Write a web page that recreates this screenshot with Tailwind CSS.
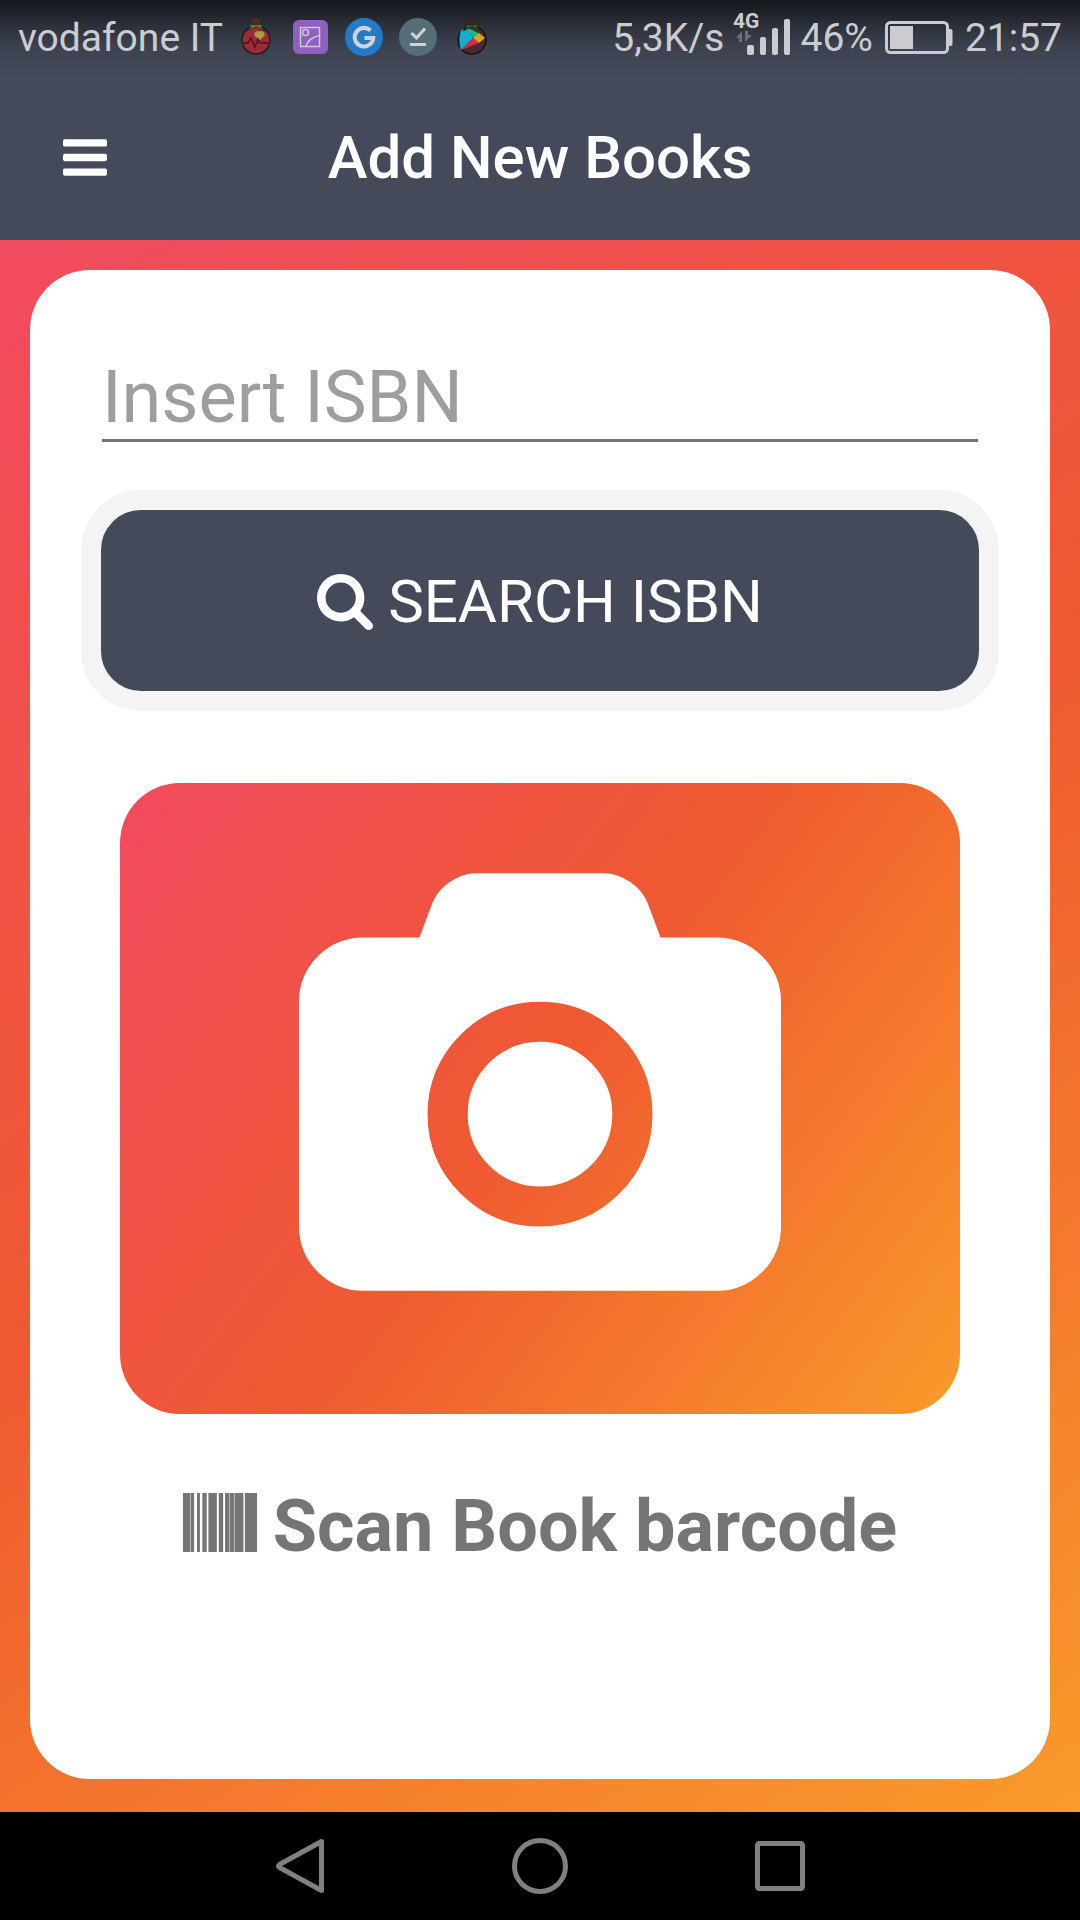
<!DOCTYPE html>
<html lang="en">
<head>
<meta charset="utf-8">
<meta name="viewport" content="width=device-width, initial-scale=1">
<title>Add New Books</title>
<script src="https://cdn.jsdelivr.net/npm/@tailwindcss/browser@4"></script>
</head>
<body class="flex min-h-screen flex-col bg-black font-[Roboto,sans-serif]">
<header class="bg-[#444a59] text-white">
  <!-- System status bar -->
  <div class="flex h-[76px] items-center justify-between bg-[linear-gradient(180deg,#181a1e_0%,#1c1f24_12%,#2d313a_35%,#3c4250_62%,#444a59_100%)] px-[18px] text-[39px] leading-[72px] text-[#cbccd0]">
    <div class="flex items-center gap-[14px]">
      <span class="whitespace-nowrap">vodafone IT</span>
      <div class="flex items-center gap-4 pb-[2px]">
      <svg class="h-[38px] w-[38px] shrink-0" viewBox="0 0 38 38" aria-hidden="true">
        <circle cx="19" cy="22" r="14" fill="#9b2b35" stroke="#1d1f25" stroke-width="1.5"/>
        <circle cx="19" cy="4" r="2.5" fill="none" stroke="#6e2530" stroke-width="2"/>
        <path d="M19 7l-7-1 2 3-4 4 6-3 3-1 3 1 6 3-4-4 2-3z" fill="#6e7a35" stroke="#2f351d"/>
        <path d="M22.500 22l-4.500-4.500a3 3 0 0 1 4.500-3.500a3 3 0 0 1 4.500 3.500z" fill="#b39a3f" stroke="#b39a3f"/>
        <path d="M5 25h6l3-5 4 9 3-8 2 4h10" fill="none" stroke="#4b161d" stroke-width="1.500"/>
      </svg>
      <svg class="h-[38px] w-[38px] shrink-0" viewBox="0 0 38 38" aria-hidden="true">
        <rect x="2" y="2" width="35" height="34" rx="6" fill="#9060bf"/>
        <g fill="none" stroke="#cfc6dc" stroke-width="1.500"><rect x="9.500" y="9.500" width="19" height="19"/><circle cx="14.500" cy="14.500" r="3"/><path d="M15 28.500c1-4 4-9 13.500-11"/></g>
      </svg>
      <svg class="h-[38px] w-[38px] shrink-0" viewBox="0 0 38 38" aria-hidden="true">
        <circle cx="19" cy="19" r="19" fill="#237bc8"/>
        <path d="M25.500 12.500A9.300 9.300 0 1 0 28.300 20H19.500" fill="none" stroke="#d0d3d8" stroke-width="4"/>
      </svg>
      <svg class="h-[38px] w-[38px] shrink-0" viewBox="0 0 38 38" aria-hidden="true">
        <circle cx="19" cy="19" r="19" fill="#546e7a"/>
        <path d="M12.500 15l5 5L26 10.500M11 26.500h16" fill="none" stroke="#d0d3d6" stroke-width="3"/>
      </svg>
      <svg class="h-[38px] w-[38px] shrink-0" viewBox="0 0 38 38" aria-hidden="true">
        <circle cx="19" cy="22" r="14" fill="#4b2a2e" stroke="#17181b" stroke-width="1.500"/>
        <circle cx="19" cy="4" r="2.500" fill="none" stroke="#3a2023" stroke-width="2"/>
        <path d="M8 12l8-2 4 10-12 12c-2-6-2-14 0-20z" fill="#14acd0"/>
        <path d="M15 10l12 6-6 5z" fill="#1cc06f"/>
        <path d="M26 15l6 5-6 5-6-5z" fill="#d9a81a"/>
        <path d="M8 32l12-12 6 5z" fill="#cf3048"/>
        <path d="M19 7l-7-1 2 3-4 4 6-3 3-1 3 1 6 3-4-4 2-3z" fill="#35652c" stroke="#1c2a18"/>
      </svg>
      </div>
    </div>
    <div class="flex items-center">
      <span class="whitespace-nowrap">5,3K/s</span>
      <svg class="mb-2 ml-2 h-[46px] w-[60px] shrink-0 overflow-visible" viewBox="0 0 60 46" role="img" aria-label="4G signal">
        <text x="1" y="17" fill="#cbccd0" font-family="Roboto, sans-serif" font-size="21" font-weight="700">4G</text>
        <path d="M10 20v11H7v-4H4zM13 31V20h3v4h4z" fill="#6d7078"/>
        <g fill="#cbccd0"><rect x="15" y="34" width="7" height="10" rx="2"/><rect x="28" y="26" width="6" height="18" rx="2"/><rect x="40" y="17" width="6" height="27" rx="2"/><rect x="52" y="8" width="6" height="36" rx="2"/></g>
      </svg>
      <span class="ml-2">46%</span>
      <svg class="ml-3 h-[34px] w-[68px] shrink-0" viewBox="0 0 68 34" role="img" aria-label="Battery">
        <rect x="1.500" y="1.500" width="61" height="30" rx="4" fill="none" stroke="#cbccd0" stroke-width="3"/>
        <path d="M64 8h1.500a2 2 0 0 1 2 2v13a2 2 0 0 1-2 2H64z" fill="#cbccd0"/>
        <rect x="5" y="5" width="23" height="23" fill="#cbccd0"/>
      </svg>
      <time class="ml-3">21:57</time>
    </div>
  </div>
  <!-- App bar -->
  <div class="grid h-[164px] grid-cols-[1fr_auto_1fr] items-center px-[63px]">
    <button type="button" aria-label="Menu" class="mb-[2px] justify-self-start">
      <svg class="h-[37px] w-[44px]" viewBox="0 0 1536 1280" fill="currentColor" aria-hidden="true"><rect width="1536" height="256" rx="64"/><rect y="512" width="1536" height="256" rx="64"/><rect y="1024" width="1536" height="256" rx="64"/></svg>
    </button>
    <h1 class="text-[60px] leading-[72px] font-medium">Add New Books</h1>
  </div>
</header>

<main class="flex flex-1 flex-col bg-[linear-gradient(146deg,#f24a60_0%,#ef5a30_50%,#f99b2a_100%)] px-[30px] pt-[30px] pb-[33px]">
  <form class="flex flex-1 flex-col rounded-[60px] bg-white px-[51px] pt-[85px]">
    <input type="text" aria-label="Insert ISBN" placeholder="Insert ISBN" class="mx-[21px] h-[87px] border-b-[3px] border-[#757575] text-[72px] leading-[84px] text-[#757575] outline-none placeholder:text-[#9e9e9e]">
    <button type="button" class="mt-12 flex h-[221px] items-center justify-center gap-[15px] rounded-[60px] border-[20px] border-[#f4f4f4] bg-[#444a59] pt-[2px] text-[60px] leading-[72px] text-white">
      <svg class="h-14 w-14" viewBox="64 128 1664 1664" fill="currentColor" aria-hidden="true"><path d="M1216 832q0-185-131.500-316.500t-316.500-131.500-316.500 131.500-131.500 316.500 131.500 316.500 316.500 131.500 316.500-131.500 131.500-316.500zm512 832q0 52-38 90t-90 38q-54 0-90-38l-343-342q-179 124-399 124-143 0-273.500-55.500t-225-150-150-225-55.500-273.500 55.500-273.500 150-225 225-150 273.500-55.500 273.500 55.500 225 150 150 225 55.500 273.500q0 220-124 399l343 343q37 37 37 90z"/></svg>
      <span>SEARCH ISBN</span>
    </button>
    <button type="button" aria-label="Scan with camera" class="mx-[39px] mt-[72px] flex justify-center rounded-[60px] bg-[linear-gradient(127deg,#f24a60_0%,#ef5a30_50%,#f99b2a_100%)] pt-[90px] pb-[123px] text-white">
      <svg class="h-[418px] w-[482px]" viewBox="0 0 1920 1664" fill="currentColor" aria-hidden="true"><path d="M960 672q119 0 203.500 84.500t84.500 203.500-84.500 203.500-203.500 84.500-203.500-84.500-84.500-203.500 84.500-203.500 203.500-84.500zm704-416q106 0 181 75t75 181v896q0 106-75 181t-181 75h-1408q-106 0-181-75t-75-181v-896q0-106 75-181t181-75h224l51-136q19-49 69.500-84.500t103.500-35.500h512q53 0 103.500 35.500t69.500 84.500l51 136h224zm-704 1152q185 0 316.500-131.500t131.500-316.500-131.500-316.500-316.500-131.500-316.500 131.500-131.500 316.500 131.500 316.500 316.500 131.500z"/></svg>
    </button>
    <p class="mt-[71px] flex items-center justify-center gap-4 text-[72px] leading-[84px] font-bold text-[#757575]">
      <svg class="mb-[10px] h-[59px] w-[74px]" viewBox="0 0 153 120" preserveAspectRatio="none" fill="currentColor" aria-hidden="true"><path d="M0 0h15.500v120H0zM16.500 0h6.500v120h-6.500zM29 0h6v120h-6zM40 0h9v120h-9zM52.500 0h17.500v120H52.500zM74 0h9v120h-9zM87 0h8.500v120H87zM96.500 0h10v120h-10zM107.500 0h17.500v120h-17.500zM128 0h25v120h-25z"/></svg>
      <span>Scan Book barcode</span>
    </p>
  </form>
</main>

<!-- System navigation -->
<nav aria-label="System" class="flex h-[108px] items-center justify-center bg-black text-[#808080]">
  <button type="button" aria-label="Back" class="flex w-60 justify-center"><svg class="h-[58px] w-[58px]" viewBox="0 0 58 58" fill="none" stroke="currentColor" stroke-width="5" stroke-linejoin="round" aria-hidden="true"><path d="M50.500 4.500v49L8.500 30.500q-2-1.500 0-3z"/></svg></button>
  <button type="button" aria-label="Home" class="flex w-60 justify-center"><svg class="h-[58px] w-[58px]" viewBox="0 0 58 58" fill="none" stroke="currentColor" stroke-width="5" aria-hidden="true"><circle cx="29" cy="29" r="25.500"/></svg></button>
  <button type="button" aria-label="Recent apps" class="flex w-60 justify-center"><svg class="h-[58px] w-[58px]" viewBox="0 0 58 58" fill="none" stroke="currentColor" stroke-width="5" aria-hidden="true"><rect x="6.500" y="6.500" width="45" height="45" rx="2"/></svg></button>
</nav>
</body>
</html>
